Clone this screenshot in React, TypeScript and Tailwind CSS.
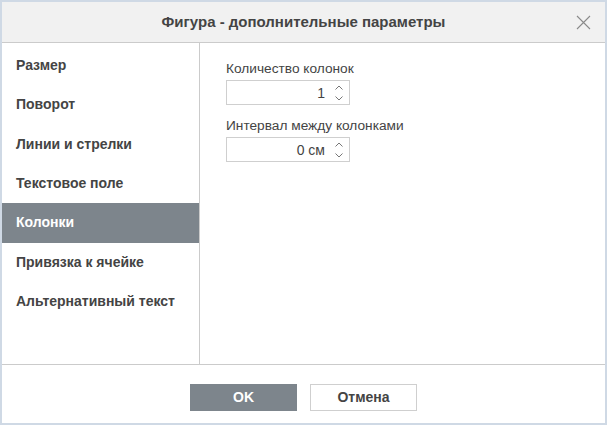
import { useState } from "react";

const tabs = [
  "Размер",
  "Поворот",
  "Линии и стрелки",
  "Текстовое поле",
  "Колонки",
  "Привязка к ячейке",
  "Альтернативный текст",
];

function Spinner({ value }: { value: string }) {
  return (
    <div className="flex h-[25px] w-[124px] items-center border border-[#cfcfcf] bg-white">
      <span className="flex-1 pr-[6px] text-right text-[14px] leading-[16px] text-[#444]">{value}</span>
      <div className="flex w-[18px] flex-col items-center justify-center gap-[6px] pr-[3px]">
        <svg width="8" height="5" viewBox="0 0 8 5" fill="none" stroke="#666" strokeWidth="0.9">
          <path d="M0.5 4.5 L4 1 L7.5 4.5" />
        </svg>
        <svg width="8" height="5" viewBox="0 0 8 5" fill="none" stroke="#666" strokeWidth="0.9">
          <path d="M0.5 0.5 L4 4 L7.5 0.5" />
        </svg>
      </div>
    </div>
  );
}

export default function App() {
  const [active, setActive] = useState(4);

  return (
    <div className="h-[425px] w-[607px] bg-[#cfd9e5] p-[2px] font-['Liberation_Sans',Arial,sans-serif]">
      <div className="flex h-full flex-col bg-white">
        <div className="relative flex h-[41px] items-center justify-center border-b border-[#cbcbcb] bg-[#f1f1f1]">
          <span className="text-[15px] font-bold text-[#444]">Фигура - дополнительные параметры</span>
          <button className="absolute right-[14px] top-[13px] text-[#888]">
            <svg width="15" height="15" viewBox="0 0 15 15" stroke="#8a8a8a" strokeWidth="1.1">
              <path d="M1 1 L14 14 M14 1 L1 14" />
            </svg>
          </button>
        </div>

        <div className="flex flex-1">
          <div className="w-[198px] border-r border-[#cbcbcb] pt-[3px]">
            {tabs.map((t, i) => (
              <div
                key={t}
                onClick={() => setActive(i)}
                className={
                  i === active
                    ? "flex h-[39.33px] cursor-pointer items-center bg-[#7d858c] pl-[14px] text-[14px] font-bold text-white"
                    : "flex h-[39.33px] cursor-pointer items-center pl-[14px] text-[14px] font-bold text-[#444]"
                }
              >
                {t}
              </div>
            ))}
          </div>
          <div className="flex flex-col pl-[26px] pt-[18px]">
            <span className="mb-[3px] text-[13.7px] leading-[16px] text-[#444]">Количество колонок</span>
            <Spinner value="1" />
            <span className="mb-[3px] mt-[13px] text-[13.7px] leading-[16px] text-[#444]">
              Интервал между колонками
            </span>
            <Spinner value="0 см" />
          </div>
        </div>

        <div className="flex h-[59px] items-start justify-center gap-[13px] border-t border-[#cbcbcb] pt-[19px]">
          <button className="h-[27px] w-[107px] bg-[#7d858c] text-[14px] font-bold text-white">OK</button>
          <button className="h-[27px] w-[107px] border border-[#cfcfcf] bg-white text-[14px] font-bold text-[#444]">
            Отмена
          </button>
        </div>
      </div>
    </div>
  );
}
